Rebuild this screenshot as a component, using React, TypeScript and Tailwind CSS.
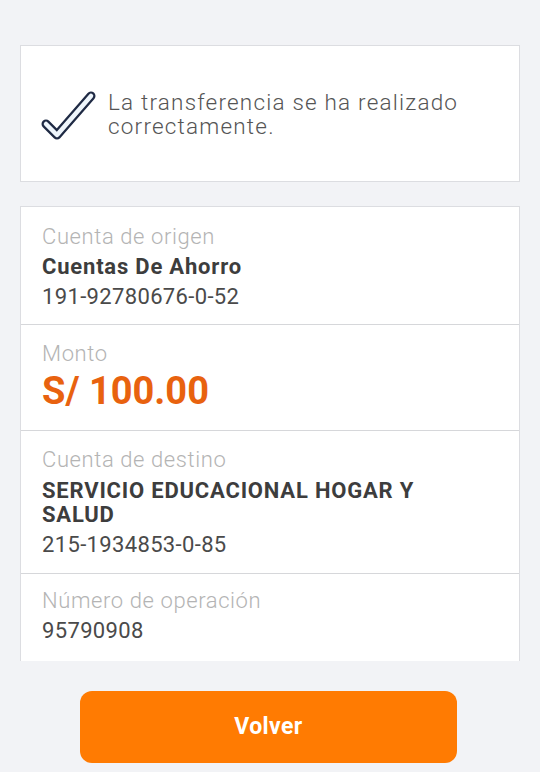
const rowLabel = "text-[22px] leading-[30px] font-light tracking-[0.6px] text-[#b4b4b4]";
const rowValue = "text-[22px] leading-[30px] tracking-[0.35px] text-[#4a4a4a]";
const rowStrong = "text-[22px] font-bold tracking-[0.8px] text-[#3d3d3d]";

const CheckIcon = () => (
  <svg width="56" height="52" viewBox="0 0 56 52" fill="none">
    <path
      d="M5 36 L16 47 L50 8"
      stroke="#1f2a44"
      strokeWidth="9"
      strokeLinecap="round"
      strokeLinejoin="round"
    />
    <path
      d="M5 36 L16 47 L50 8"
      stroke="#eef5fb"
      strokeWidth="4.5"
      strokeLinecap="round"
      strokeLinejoin="round"
    />
  </svg>
);

export default function App() {
  return (
    <div
      className="w-[540px] h-[772px] bg-[#f2f3f6] px-[20px] pt-[45px] overflow-hidden"
      style={{ fontFamily: "Roboto, 'Open Sans', sans-serif" }}
    >
      {/* success message */}
      <div className="h-[137px] bg-white border border-[#dcdde1] flex items-center pl-[20px]">
        <CheckIcon />
        <p className="ml-[11px] text-[22.5px] leading-[24px] font-light tracking-[1.2px] text-[#555]">
          La transferencia se ha realizado
          <br />
          correctamente.
        </p>
      </div>

      {/* details */}
      <div className="mt-[24px] h-[455px] bg-white border-x border-t border-[#dcdde1] overflow-hidden">
        <div className="px-[21px] pt-[15px] pb-[12px] border-b border-[#d6d7da]">
          <p className={rowLabel}>Cuenta de origen</p>
          <p className={`leading-[30px] ${rowStrong}`}>Cuentas De Ahorro</p>
          <p className={rowValue}>191-92780676-0-52</p>
        </div>
        <div className="px-[21px] pt-[14px] pb-[17px] border-b border-[#d6d7da]">
          <p className={rowLabel}>Monto</p>
          <p className="text-[38px] leading-[44px] font-bold text-[#e8620f]">S/ 100.00</p>
        </div>
        <div className="px-[21px] pt-[14px] pb-[13px] border-b border-[#d6d7da]">
          <p className={rowLabel}>Cuenta de destino</p>
          <p className={`mt-[4px] leading-[24px] pr-[40px] ${rowStrong}`}>
            SERVICIO EDUCACIONAL HOGAR Y SALUD
          </p>
          <p className={`mt-[3px] ${rowValue}`}>215-1934853-0-85</p>
        </div>
        <div className="px-[21px] pt-[12px]">
          <p className={rowLabel}>Número de operación</p>
          <p className={rowValue}>95790908</p>
        </div>
      </div>

      <div className="mt-[30px] pl-[60px]">
        <button className="w-[377px] h-[72px] rounded-[12px] bg-[#ff7b02] text-white text-[23px] tracking-[0.4px] font-bold">
          Volver
        </button>
      </div>
    </div>
  );
}
